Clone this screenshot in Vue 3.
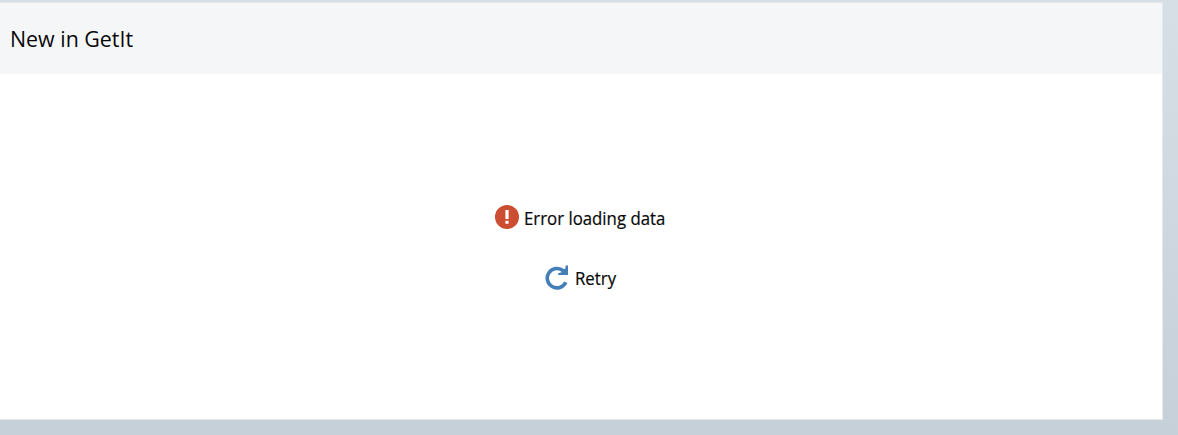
<script setup>
</script>

<template>
  <main class="page">
    <section class="panel">
      <header class="header"><h1 class="title">New in GetIt</h1></header>
      <div class="body">
        <div class="error">
          <svg class="alert" viewBox="0 0 24 24" width="24" height="24">
            <circle cx="12" cy="12" r="12" fill="#cb4d32" />
            <path d="M10.4 5h3.2v9h-3.2zM10.4 15.8h3.2v3h-3.2z" fill="#fff" />
          </svg>
          <span class="label error-text">Error loading data</span>
        </div>
        <button class="retry" type="button">
          <svg width="24" height="25" viewBox="0 0 24 25">
            <path d="M18.4 5.9A9.7 9.7 0 1 0 20.8 17.2" fill="none" stroke="#437eb7" stroke-width="3.6" />
            <path d="M23 0.6V10H13.2V8.2L16.5 7.2L17.6 4.2L20.5 3.6V0.6Z" fill="#437eb7" />
          </svg>
          <span class="label retry-text">Retry</span>
        </button>
      </div>
    </section>
  </main>
</template>

<style>
body { margin: 0; }
</style>

<style scoped>
.page {
  box-sizing: border-box;
  width: 1178px;
  height: 435px;
  padding: 2px 15px 15px 0;
  background: linear-gradient(#d7dfe6, #c6d0d9);
  font-family: "Open Sans", "Noto Sans", sans-serif;
  color: #080808;
}
.panel {
  box-sizing: border-box;
  height: 418px;
  border: solid #e4e9ed;
  border-width: 1px 1px 1px 0;
  background: #fff;
}
.header {
  box-sizing: border-box;
  display: flex;
  align-items: center;
  height: 71px;
  padding: 0 0 1px 10px;
  background: #f5f6f8;
}
.title {
  margin: 0;
  font-size: 22px;
  font-weight: 400;
  line-height: 30px;
  white-space: nowrap;
  transform: scaleX(0.972);
  transform-origin: left;
}
.body {
  display: flex;
  flex-direction: column;
  align-items: flex-start;
  padding-top: 131px;
}
.error, .retry {
  display: flex;
  align-items: center;
  height: 24px;
}
.error { margin-left: 494.5px; }
.retry {
  margin: 36px 0 0 544.5px;
  padding: 0;
  border: 0;
  background: none;
  font: inherit;
  color: inherit;
}
.label {
  font-size: 17.3px;
  line-height: 24px;
  white-space: nowrap;
  transform: scaleX(0.972);
  transform-origin: left;
  -webkit-text-stroke: 0.2px #080808;
}
.error-text { margin: 3px 0 0 5.5px; }
.retry-text { margin: 3px 0 0 6.8px; }
</style>
